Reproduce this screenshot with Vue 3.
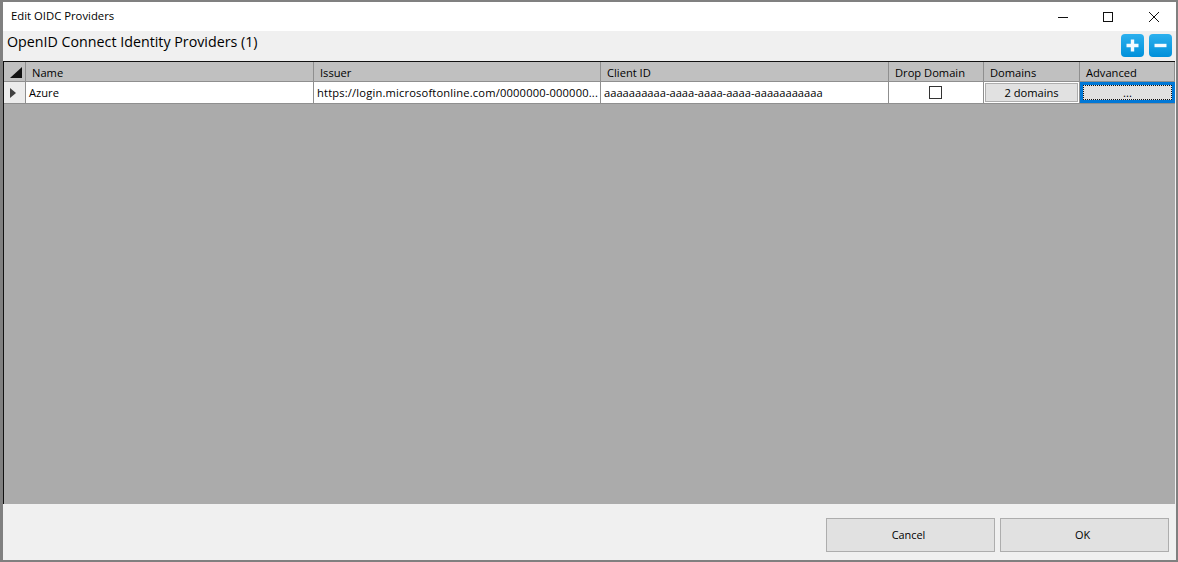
<script setup>
const columns = [
  { label: 'Name', width: 288 },
  { label: 'Issuer', width: 287 },
  { label: 'Client ID', width: 288 },
  { label: 'Drop Domain', width: 95 },
  { label: 'Domains', width: 96 },
  { label: 'Advanced', width: 95 }
]
</script>

<template>
  <div class="window">
    <header class="titlebar">
      <span class="title">Edit OIDC Providers</span>
      <div class="controls">
        <svg width="16" height="16" viewBox="0 0 16 16"><path d="M2 8.5h10" stroke="#111" fill="none"/></svg>
        <svg width="16" height="16" viewBox="0 0 16 16"><rect x="3.5" y="3.5" width="9" height="9" stroke="#111" fill="none"/></svg>
        <svg width="16" height="16" viewBox="0 0 16 16"><path d="M5 3l10 10M15 3L5 13" stroke="#111" fill="none"/></svg>
      </div>
    </header>

    <div class="toolbar">
      <span class="heading">OpenID Connect Identity Providers (1)</span>
      <div class="tools">
        <button class="tool" aria-label="Add">
          <svg width="23" height="23" viewBox="0 0 23 23"><path d="M11.5 5.5v12M5.5 11.5h12" stroke="#f4fbff" stroke-width="3.4" fill="none"/></svg>
        </button>
        <button class="tool" aria-label="Remove">
          <svg width="23" height="23" viewBox="0 0 23 23"><path d="M5.5 11.5h12" stroke="#f4fbff" stroke-width="3.4" fill="none"/></svg>
        </button>
      </div>
    </div>

    <section class="grid">
      <div class="head">
        <div class="corner"><span class="corner-mark"></span></div>
        <div v-for="c in columns" :key="c.label" class="hcell" :style="{ width: c.width + 'px' }">{{ c.label }}</div>
      </div>
      <div class="row">
        <div class="rowhead"><span class="arrow"></span></div>
        <div class="cell" :style="{ width: columns[0].width + 'px' }">Azure</div>
        <div class="cell wide" :style="{ width: columns[1].width + 'px' }">https://login.microsoftonline.com/0000000-000000...</div>
        <div class="cell" :style="{ width: columns[2].width + 'px' }">aaaaaaaaaa-aaaa-aaaa-aaaa-aaaaaaaaaaa</div>
        <div class="cell center" :style="{ width: columns[3].width + 'px' }"><span class="check"></span></div>
        <div class="cell btncell" :style="{ width: columns[4].width + 'px' }"><button class="gridbtn">2 domains</button></div>
        <div class="cell focus" :style="{ width: columns[5].width + 'px' }"><button class="gridbtn dotted">...</button></div>
      </div>
    </section>

    <footer class="footer">
      <button class="action">Cancel</button>
      <button class="action">OK</button>
    </footer>
  </div>
</template>

<style>
html, body { margin: 0; padding: 0; background: #808080; overflow: hidden; }
</style>

<style scoped>
.window {
  width: 1178px;
  height: 562px;
  box-sizing: border-box;
  border: 2px solid #808080;
  border-left-width: 3px;
  display: flex;
  flex-direction: column;
  font-family: "Open Sans", "Noto Sans", sans-serif;
  font-size: 11.15px;
  color: #000;
  background: #f0f0f0;
}
.titlebar {
  height: 29px;
  flex: none;
  background: #fff;
  display: flex;
  align-items: flex-start;
  justify-content: space-between;
  padding-left: 8px;
}
.title { font-size: 11.3px; line-height: 28px; }
.controls { display: flex; gap: 28px; padding-right: 16px; padding-top: 7px; }
.controls svg { display: block; }
.toolbar {
  height: 30px;
  flex: none;
  display: flex;
  justify-content: space-between;
  padding-left: 4px;
  padding-right: 4px;
  background: #f0f0f0;
}
.heading { font-size: 14.25px; line-height: 21px; }
.tools { display: flex; gap: 5px; padding-top: 3px; }
.tool {
  width: 23px;
  height: 23px;
  padding: 0;
  border: 0;
  border-radius: 4px;
  background: linear-gradient(#2cb0ee, #0090da);
}
.tool svg { display: block; }
.grid {
  flex: 1;
  min-height: 0;
  background: #ababab;
  border-top: 1px solid #111;
  border-left: 1px solid #111;
  margin-right: 1px;
}
.head { display: flex; height: 19px; background: #c0c0c0; border-bottom: 1px solid #8f8f8f; }
.corner {
  width: 22px;
  flex: none;
  box-sizing: border-box;
  border-right: 1px solid #8f8f8f;
  position: relative;
}
.corner-mark {
  position: absolute;
  right: 3px;
  bottom: 3px;
  border-style: solid;
  border-width: 0 0 11px 12px;
  border-color: transparent transparent #111 transparent;
}
.hcell {
  flex: none;
  box-sizing: border-box;
  border-right: 1px solid #8f8f8f;
  padding-left: 6px;
  line-height: 21px;
  white-space: nowrap;
}
.row { display: flex; height: 21px; border-bottom: 1px solid #8f8f8f; background: #ababab; }
.rowhead {
  width: 22px;
  flex: none;
  box-sizing: border-box;
  background: #ececec;
  border-right: 1px solid #8f8f8f;
  display: flex;
  align-items: center;
  padding-left: 6px;
}
.arrow {
  border-style: solid;
  border-width: 5px 0 5px 6px;
  border-color: transparent transparent transparent #404040;
}
.cell {
  flex: none;
  box-sizing: border-box;
  border-right: 1px solid #8f8f8f;
  padding-left: 3px;
  line-height: 21px;
  white-space: nowrap;
  overflow: hidden;
  background: #fff;
}
.wide { letter-spacing: 0.17px; }
.center { display: flex; align-items: center; justify-content: center; padding: 0 2px 0 0; }
.check { width: 11px; height: 11px; border: 1px solid #333; background: #fff; }
.btncell { padding: 1px; }
.gridbtn {
  display: block;
  width: 100%;
  height: 100%;
  padding: 0;
  border: 1px solid #adadad;
  background: #e1e1e1;
  font: inherit;
  line-height: 15px;
  color: inherit;
}
.focus {
  padding: 0;
  border: 3px solid #0078d7;
  background: #e1e1e1;
}
.dotted { border: 1px dotted #111; line-height: 13px; }
.footer {
  flex: none;
  height: 56px;
  box-sizing: border-box;
  display: flex;
  justify-content: flex-end;
  gap: 5px;
  padding: 14px 7px 8px 0;
}
.action {
  width: 169px;
  height: 34px;
  border: 1px solid #adadad;
  background: #e1e1e1;
  font: inherit;
  font-size: 10.9px;
  color: #000;
  padding: 0 4px 2px 0;
}
</style>
